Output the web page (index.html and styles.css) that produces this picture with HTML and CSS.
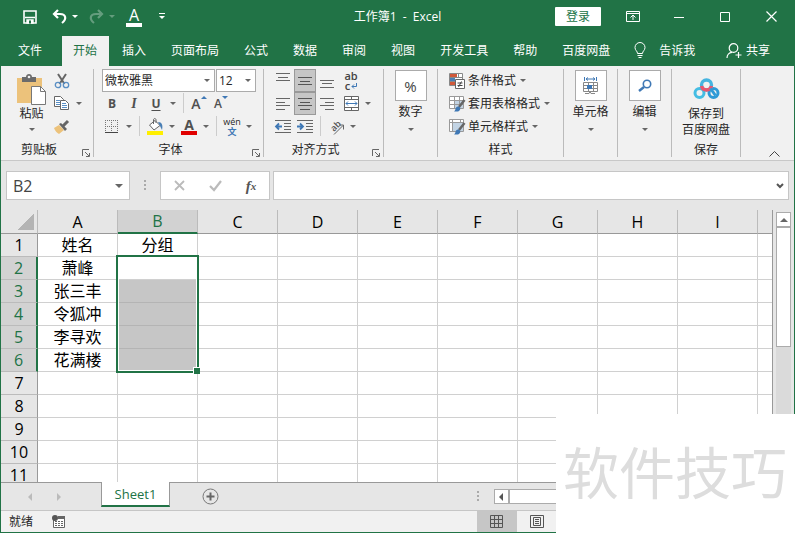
FILE: index.html
```
<!DOCTYPE html>
<html lang="zh-CN">

<head>
    <meta charset="UTF-8">
    <meta name="viewport" content="width=device-width, initial-scale=1.0">
    <title>工作簿1 - Excel</title>
    <link rel="stylesheet" href="styles.css">
</head>

<body>
    <!-- 标题栏 -->
    <header class="titlebar">
        <div class="quick">
            <button aria-label="保存"><svg width="14" height="14" viewBox="0 0 14 14"><path d="M1 1h12v12H1z" fill="none" stroke="#fff" stroke-width="1.600"/><path d="M2 7.500h10M4 10h6v3H4z" fill="#fff" stroke="#fff" stroke-width="1.400"/><path d="M6 10.500h2v3H6z" fill="#217346"/></svg></button>
            <button aria-label="撤消"><svg width="15" height="15" viewBox="0 0 15 15"><path d="M6 1L2 5l4 4M2 5h6c6 0 7 5 2 9" fill="none" stroke="#fff" stroke-width="2.200"/></svg></button>
            <button class="caret" aria-label="撤消列表"></button>
            <button class="dim" aria-label="恢复"><svg width="15" height="15" viewBox="0 0 15 15"><path d="M9 1l4 4-4 4M13 5H7C1 5 0 10 5 14" fill="none" stroke="#fff" stroke-width="2.200"/></svg></button>
            <button class="caret dim" aria-label="恢复列表"></button>
            <button class="quick-font" aria-label="字体颜色"><span>A</span></button>
            <button class="more" aria-label="自定义快速访问工具栏"><svg width="6" height="7" viewBox="0 0 6 7"><path d="M0 .5h6" stroke="#fff"/><path d="M0 3h6L3 6z" fill="#fff"/></svg></button>
        </div>
        <div class="title">工作簿1 &nbsp;- &nbsp;Excel</div>
        <div class="controls">
            <button class="login">登录</button>
            <button aria-label="功能区显示选项"><svg width="14" height="11" viewBox="0 0 14 11"><path d="M.5.500h13v10H.5zM.5 2.500h13M7 9V4.500M4.500 6.500L7 4l2.500 2.500" fill="none" stroke="#fff"/></svg></button>
            <button aria-label="最小化"><svg width="10" height="10" viewBox="0 0 10 10"><path d="M0 5.500h10" stroke="#fff"/></svg></button>
            <button aria-label="最大化"><svg width="10" height="10" viewBox="0 0 10 10"><path d="M.5.500h9v9H.5z" fill="none" stroke="#fff"/></svg></button>
            <button aria-label="关闭"><svg width="11" height="11" viewBox="0 0 11 11"><path d="M.5.500l10 10M10.500.5l-10 10" stroke="#fff" stroke-width="1.200"/></svg></button>
        </div>
    </header>

    <!-- 选项卡 -->
    <nav class="tabs">
        <button class="file">文件</button>
        <button class="active">开始</button>
        <button>插入</button>
        <button>页面布局</button>
        <button>公式</button>
        <button>数据</button>
        <button>审阅</button>
        <button>视图</button>
        <button>开发工具</button>
        <button>帮助</button>
        <button>百度网盘</button>
        <button class="tell"><svg width="12" height="17" viewBox="0 0 12 17"><path d="M3.500 11.500C3.500 9 1 8.500 1 5.500a5 5 0 0 1 10 0c0 3-2.500 3.500-2.500 6zM3.500 13.500h5M4.500 15.500h3" fill="none" stroke="#fff"/></svg>告诉我</button>
        <button class="share"><svg width="16" height="16" viewBox="0 0 16 16"><circle cx="7.500" cy="5" r="4.300" fill="none" stroke="#fff" stroke-width="1.200"/><path d="M1 15c0-3 2-5.500 5-5.700M12.500 9v6M9.500 12h6" fill="none" stroke="#fff" stroke-width="1.200"/></svg>共享</button>
    </nav>

    <!-- 功能区 -->
    <section class="ribbon">
        <div class="group clipboard">
            <div class="content">
                <button class="big paste"><svg width="29" height="31" viewBox="0 0 29 31"><path d="M0 4h25v25H0z" fill="#ecc27b"/><path d="M5 3h4c0-4 6-4 6 0h4v5H5z" fill="#6b6b6b"/><circle cx="12" cy="3" r="1.300" fill="#f1f1f1"/><path d="M14.500 12.500h9l5 5v13h-14z" fill="#fff" stroke="#777"/><path d="M23.500 12.500v5h5" fill="none" stroke="#777"/></svg><span>粘贴</span><i class="caret"></i></button>
                <div class="stack">
                    <div class="row"><button class="tool" aria-label="剪切"><svg width="16" height="16" viewBox="0 0 16 16"><path d="M4 1l6.500 10M12 1L5.500 11" stroke="#666" stroke-width="2"/><circle cx="4" cy="12" r="2.700" fill="none" stroke="#5a8fc4" stroke-width="1.300"/><circle cx="12" cy="12" r="2.700" fill="none" stroke="#5a8fc4" stroke-width="1.300"/></svg></button></div>
                    <div class="row"><button class="tool" aria-label="复制"><svg width="16" height="15" viewBox="0 0 16 15"><path d="M.5.500h6l3 3v7h-9z" fill="#fff" stroke="#666"/><path d="M2 4.500h4M2 6.500h4M2 8.500h4" stroke="#5a8fc4"/><path d="M6.500 4.500h5l3 3v6h-8z" fill="#fff" stroke="#666"/><path d="M8 7.500h4M8 9.500h5M8 11.500h5" stroke="#5a8fc4"/></svg></button><button class="caret" aria-label="复制选项"></button></div>
                    <div class="row"><button class="tool" aria-label="格式刷"><svg width="16" height="14" viewBox="0 0 16 14"><path d="M0 8l5-3 5 5-5 4C3 13 1 11 0 8z" fill="#ecc27b"/><path d="M5 4l2-1 6 6-2 2z" fill="#666"/><path d="M9 6l5-5" stroke="#666" stroke-width="3"/></svg></button></div>
                </div>
            </div>
            <h2>剪贴板</h2>
            <button class="launcher" aria-label="剪贴板设置"><svg width="8" height="8" viewBox="0 0 8 8"><path d="M.5 7V.5H7M3 3l4 4M7.500 4v3.500H4" fill="none" stroke="#666"/></svg></button>
        </div>

        <div class="group font">
            <div class="row combos">
                <div class="combo name"><select aria-label="字体"><option>微软雅黑</option></select><i class="caret"></i></div>
                <div class="combo size"><select aria-label="字号"><option>12</option></select><i class="caret"></i></div>
            </div>
            <div class="row">
                <button class="tool bold">B</button>
                <button class="tool italic">I</button>
                <button class="tool underline">U</button>
                <button class="caret" aria-label="下划线选项"></button>
                <i class="sep"></i>
                <button class="tool grow" aria-label="增大字号">A<i class="up"></i></button>
                <button class="tool shrink" aria-label="减小字号">A<i class="down"></i></button>
            </div>
            <div class="row">
                <button class="tool" aria-label="边框"><svg width="14" height="14" viewBox="0 0 14 14"><path d="M.5 0v13M6.500 0v13M12.500 0v13M0 .5h13M0 6.500h13" stroke="#777" stroke-dasharray="1 1"/><path d="M0 12.500h13" stroke="#444"/></svg></button>
                <button class="caret" aria-label="边框选项"></button>
                <i class="sep"></i>
                <button class="tool" aria-label="填充颜色"><svg width="17" height="17" viewBox="0 0 17 17"><path d="M2.500 7L8 2.500l5 5L7 12z" fill="#fff" stroke="#666"/><path d="M6.500 6V2c0-2 2.500-2 2.500 0v3" fill="none" stroke="#666"/><path d="M11 4c4 0 5 3 4 8l-2-4z" fill="#4a7fb5"/><path d="M0 13h16v4H0z" fill="#ffef00"/></svg></button>
                <button class="caret" aria-label="填充颜色选项"></button>
                <button class="tool color" aria-label="字体颜色">A</button>
                <button class="caret" aria-label="字体颜色选项"></button>
                <i class="sep"></i>
                <button class="tool pinyin"><span>wén</span><b>文</b></button>
                <button class="caret" aria-label="拼音选项"></button>
            </div>
            <h2>字体</h2>
            <button class="launcher" aria-label="字体设置"><svg width="8" height="8" viewBox="0 0 8 8"><path d="M.5 7V.5H7M3 3l4 4M7.500 4v3.500H4" fill="none" stroke="#666"/></svg></button>
        </div>

        <div class="group align">
            <div class="row">
                <button class="tool" aria-label="顶端对齐"><svg width="14" height="16" viewBox="0 0 14 16"><path d="M0 .5h14M2 4.500h10M0 7.500h14" stroke="#666"/></svg></button>
                <button class="tool on" aria-label="垂直居中"><svg width="14" height="14" viewBox="0 0 14 14"><path d="M0 3.500h14M2 7.500h10M0 10.500h14" stroke="#555"/></svg></button>
                <button class="tool" aria-label="底端对齐"><svg width="14" height="14" viewBox="0 0 14 14"><path d="M0 6.500h14M2 9.500h10M0 13.500h14" stroke="#666"/></svg></button>
                <button class="tool wrap" aria-label="自动换行"><span>ab</span><span>c<svg width="6" height="6" viewBox="0 0 6 6"><path d="M5.500 0v3.500H1M3 1.500l-2 2 2 2" fill="none" stroke="#3f78b5"/></svg></span></button>
            </div>
            <div class="row">
                <button class="tool" aria-label="左对齐"><svg width="14" height="12" viewBox="0 0 14 12"><path d="M0 .5h14M0 4.500h9M0 7.500h14M0 11.500h9" stroke="#666"/></svg></button>
                <button class="tool on" aria-label="居中"><svg width="14" height="12" viewBox="0 0 14 12"><path d="M0 .5h14M2 4.500h10M0 7.500h14M2 11.500h10" stroke="#555"/></svg></button>
                <button class="tool" aria-label="右对齐"><svg width="14" height="12" viewBox="0 0 14 12"><path d="M0 .5h14M5 4.500h9M0 7.500h14M5 11.500h9" stroke="#666"/></svg></button>
                <button class="tool merge" aria-label="合并后居中"><svg width="15" height="15" viewBox="0 0 15 15"><path d="M.5.500h14v14H.5zM.5 3.500h14M.5 11.500h14M7.500.5v3M7.500 11.500v3" fill="#fff" stroke="#666"/><path d="M2 7.500h11M4 5.500l-2 2 2 2M11 5.500l2 2-2 2" fill="none" stroke="#3f78b5"/></svg></button>
                <button class="caret" aria-label="合并选项"></button>
            </div>
            <div class="row">
                <button class="tool" aria-label="减少缩进量"><svg width="16" height="13" viewBox="0 0 16 13"><path d="M0 .5h16M9 3.500h7M9 6.500h7M9 9.500h7M0 12.500h16" stroke="#666"/><path d="M1 6.500h6M4 3.500l-3 3 3 3" fill="none" stroke="#3f78b5" stroke-width="1.800"/></svg></button>
                <button class="tool" aria-label="增加缩进量"><svg width="16" height="13" viewBox="0 0 16 13"><path d="M0 .5h16M9 3.500h7M9 6.500h7M9 9.500h7M0 12.500h16" stroke="#666"/><path d="M0 6.500h6M3 3.500l3 3-3 3" fill="none" stroke="#3f78b5" stroke-width="1.800"/></svg></button>
                <i class="sep"></i>
                <button class="tool" aria-label="方向"><svg width="18" height="18" viewBox="0 0 18 18"><text class="orient" transform="translate(7 14) rotate(-45)">ab</text><path d="M7 16.500l9-9M12 7h4.500v4.500" fill="none" stroke="#666"/></svg></button>
                <button class="caret" aria-label="方向选项"></button>
            </div>
            <h2>对齐方式</h2>
            <button class="launcher" aria-label="对齐设置"><svg width="8" height="8" viewBox="0 0 8 8"><path d="M.5 7V.5H7M3 3l4 4M7.500 4v3.500H4" fill="none" stroke="#666"/></svg></button>
        </div>

        <div class="group">
            <button class="big boxed"><span class="box percent">%</span><span>数字</span><i class="caret"></i></button>
        </div>

        <div class="group styles">
            <div class="row"><button class="line"><svg width="16" height="16" viewBox="0 0 16 16"><path d="M.5.500h13v12H.5z" fill="#fff" stroke="#888"/><path d="M1 1h7v3H1zM1 9h6v3H1z" fill="#d0583a"/><path d="M1 5h5v3H1z" fill="#4a7fb5"/><path d="M9.500 1v4M1 4.500h12M1 8.500h6" stroke="#888"/><path d="M6.500 6.500h9v9h-9z" fill="#fff" stroke="#666"/><path d="M8.500 10h5M8.500 12.500h5M12.500 8.500l-3 5.500" stroke="#444"/></svg>条件格式<i class="caret"></i></button></div>
            <div class="row"><button class="line"><svg width="16" height="16" viewBox="0 0 16 16"><path d="M.5.500h14v12H.5z" fill="#fff" stroke="#999"/><path d="M5 4h9v8H5z" fill="#c3d4e4"/><path d="M5.500.5v12M10.500.5v12M.5 4.500h14M.5 8.500h14" stroke="#999"/><path d="M15.500 4L10 11" stroke="#666" stroke-width="2.500"/><path d="M5 15.500c2-1 1-5 4-5s3 4 0 5z" fill="#3f78b5"/></svg>套用表格格式<i class="caret"></i></button></div>
            <div class="row"><button class="line"><svg width="16" height="16" viewBox="0 0 16 16"><path d="M.5.500h14v12H.5z" fill="#fff" stroke="#999"/><path d="M3.500.5v12M.5 3.500h14M11.500.5v3" stroke="#999"/><path d="M4 4h10v8H4z" fill="#c3d4e4"/><path d="M15.500 4L10 11" stroke="#666" stroke-width="2.500"/><path d="M5 15.500c2-1 1-5 4-5s3 4 0 5z" fill="#3f78b5"/></svg>单元格样式<i class="caret"></i></button></div>
            <h2>样式</h2>
        </div>

        <div class="group">
            <button class="big boxed"><span class="box"><svg width="16" height="17" viewBox="0 0 16 17"><path d="M1.500 0v4M13.500 0v4M3 2h9M5 .5L3 2l2 1.500M10 .5L12 2l-2 1.500" fill="none" stroke="#3f78b5"/><path d="M.5 5.500h14v9H.5zM5.500 5.500v9M10.500 5.500v9M.5 8.500h14M.5 11.500h14M2 16.500h4l1-2 1 2h4" fill="none" stroke="#888"/><path d="M4 8h5v4H4z" fill="#3f78b5"/></svg></span><span>单元格</span><i class="caret"></i></button>
        </div>

        <div class="group">
            <button class="big boxed"><span class="box"><svg width="14" height="14" viewBox="0 0 14 14"><circle cx="9" cy="5" r="3.700" fill="none" stroke="#3f78b5" stroke-width="1.600"/><path d="M6 8l-5 4" stroke="#3f78b5" stroke-width="2.400"/></svg></span><span>编辑</span><i class="caret"></i></button>
        </div>

        <div class="group save">
            <button class="big"><svg width="27" height="21" viewBox="0 0 27 21"><circle cx="6.500" cy="15" r="4.500" fill="none" stroke="#45bde3" stroke-width="3"/><circle cx="20.500" cy="15" r="4.500" fill="none" stroke="#2f9ad6" stroke-width="3"/><circle cx="13.500" cy="7" r="5" fill="none" stroke="#45b4e0" stroke-width="3.400"/><path d="M8.600 8a5 5 0 0 0 9.800 0" fill="none" stroke="#e8566f" stroke-width="3.400"/><path d="M17.500 10.500l5 7" stroke="#2f9ad6" stroke-width="3"/></svg><span>保存到<br>百度网盘</span></button>
            <h2>保存</h2>
        </div>

        <button class="collapse" aria-label="折叠功能区"><svg width="11" height="6" viewBox="0 0 11 6"><path d="M.5 5.500l5-5 5 5" fill="none" stroke="#444"/></svg></button>
    </section>

    <!-- 编辑栏 -->
    <section class="formula">
        <div class="namebox"><input type="text" value="B2" aria-label="名称框"><i class="caret"></i></div>
        <i class="dots"></i>
        <div class="actions">
            <button aria-label="取消"><svg width="11" height="11" viewBox="0 0 11 11"><path d="M1 1l9 9M10 1l-9 9" stroke="#bbb" stroke-width="1.800"/></svg></button>
            <button aria-label="输入"><svg width="13" height="11" viewBox="0 0 13 11"><path d="M1 6l4 4 7-9" fill="none" stroke="#bbb" stroke-width="2.200"/></svg></button>
            <button class="fx" aria-label="插入函数">f<sub>x</sub></button>
        </div>
        <div class="editor"><input type="text" aria-label="编辑栏"><svg width="8" height="6" viewBox="0 0 8 6"><path d="M1 1l3 3 3-3" fill="none" stroke="#555" stroke-width="2"/></svg></div>
    </section>

    <!-- 工作表 -->
    <main class="sheet">
        <div class="grid">
            <table>
                <thead>
                    <tr>
                        <th class="corner"></th>
                        <th>A</th>
                        <th class="sel">B</th>
                        <th>C</th>
                        <th>D</th>
                        <th>E</th>
                        <th>F</th>
                        <th>G</th>
                        <th>H</th>
                        <th>I</th>
                        <th class="rest"></th>
                    </tr>
                </thead>
                <tbody id="rows"></tbody>
            </table>
        </div>
        <div class="vscroll">
            <button aria-label="向上滚动"><i class="up"></i></button>
            <div class="thumb"></div>
        </div>
    </main>

    <!-- 工作表标签 -->
    <footer class="sheets">
        <button class="prev" aria-label="上一个"></button>
        <button class="next" aria-label="下一个"></button>
        <button class="tab">Sheet1</button>
        <button class="add" aria-label="新工作表"><svg width="17" height="17" viewBox="0 0 17 17"><circle cx="8.500" cy="8.500" r="7.500" fill="none" stroke="#777"/><path d="M8.500 4.500v8M4.500 8.500h8" stroke="#666" stroke-width="2"/></svg></button>
        <div class="hscroll">
            <i class="dots"></i>
            <button aria-label="向左滚动"><i class="left"></i></button>
            <div class="thumb"></div>
        </div>
    </footer>

    <!-- 状态栏 -->
    <footer class="status">
        <span>就绪</span>
        <button aria-label="宏录制"><svg width="14" height="13" viewBox="0 0 14 13"><path d="M1.500 4v8.500h11V2H6" fill="#fff" stroke="#666"/><path d="M6 1h7v3H6z" fill="#666"/><circle cx="3" cy="3" r="3" fill="#555"/><path d="M3 6.500h9M3 8.500h9M3 10.500h9" stroke="#666" stroke-dasharray="2 1"/></svg></button>
        <div class="views">
            <button class="on" aria-label="普通"><svg width="13" height="13" viewBox="0 0 13 13"><path d="M.5.500h12v12H.5zM4.500.5v12M8.500.5v12M.5 4.500h12M.5 8.500h12" fill="none" stroke="#555"/></svg></button>
            <button aria-label="页面布局"><svg width="14" height="13" viewBox="0 0 14 13"><path d="M.5.500h13v12H.5zM3.500 2.500h7v8h-7zM5 4.500h4M5 6.500h4M5 8.500h4" fill="none" stroke="#555"/></svg></button>
        </div>
    </footer>

    <div class="watermark">软件技巧</div>

    <script>
        // 表格数据
        var data = [
            ['姓名', '分组'],
            ['萧峰'],
            ['张三丰'],
            ['令狐冲'],
            ['李寻欢'],
            ['花满楼']
        ];
        var html = '';
        for (var r = 1; r <= 11; r++) {
            var picked = r >= 2 && r <= 6; // B2:B6 为选中区域
            html += '<tr><th class="' + (picked ? 'sel' : '') + '">' + r + '</th>';
            for (var c = 0; c < 10; c++) {
                var text = (data[r - 1] && data[r - 1][c]) || '';
                if (r === 2 && c === 1) {
                    html += '<td class="first"><div class="range"></div></td>';
                } else {
                    html += '<td' + (picked && c === 1 ? ' class="picked"' : '') + '>' + text + '</td>';
                }
            }
            html += '</tr>';
        }
        document.getElementById('rows').innerHTML = html;
    </script>
</body>

</html>
```
FILE: styles.css
```
* {
    box-sizing: border-box;
}

body {
    margin: 0;
    height: 100vh;
    display: flex;
    flex-direction: column;
    overflow: hidden;
    border: 1px solid #217346;
    border-top: 0;
    background: #e6e6e6;
    color: #262626;
    font: 12px/16px "Open Sans", "Noto Sans CJK SC", sans-serif;
}

button,
input,
select {
    margin: 0;
    padding: 0;
    border: 0;
    background: none;
    color: inherit;
    font: inherit;
}

button {
    display: flex;
    align-items: center;
    justify-content: center;
    flex: none;
}

svg {
    display: block;
    flex: none;
    overflow: visible;
}

h2 {
    margin: 0;
    font-size: 12px;
    font-weight: normal;
    line-height: 24px;
    text-align: center;
}

/* 小三角 */
.caret {
    display: flex;
    align-items: center;
    justify-content: center;
    flex: none;
    width: 12px;
}

.caret::after {
    content: "";
    border: 3px solid transparent;
    border-top-color: #666;
    border-bottom: 0;
}

.up,
.down,
.left {
    border: 3px solid transparent;
}

.up {
    border-top: 0;
    border-bottom-color: #3f78b5;
}

.down {
    border-bottom: 0;
    border-top-color: #3f78b5;
}

.left {
    border-width: 4px;
    border-left: 0;
    border-right-color: #555;
}

.dots {
    width: 2px;
    height: 11px;
    background: repeating-linear-gradient(#aaa 0 2px, transparent 2px 4px);
}

/* 标题栏 */
.titlebar {
    display: grid;
    grid-template-columns: 1fr auto 1fr;
    align-items: center;
    flex: none;
    height: 36px;
    padding-bottom: 3px;
    background: #217346;
    color: #fff;
}

.title {
    white-space: pre;
}

.quick {
    display: flex;
    align-items: center;
    padding-left: 18px;
}

.quick button {
    width: 22px;
    height: 20px;
    margin-right: 7px;
}

.quick .caret {
    width: 12px;
    margin: 0 4px 0 -8px;
}

.quick .caret::after {
    border-top-color: #fff;
}

.quick .dim {
    opacity: 0.3;
}

.quick .quick-font {
    width: 16px;
    margin: 0 12px 0 4px;
}

.quick-font span {
    width: 16px;
    border-bottom: 4px solid #fff;
    font-size: 16px;
    line-height: 16px;
}

.quick .more {
    width: 16px;
}

.controls {
    display: flex;
    align-items: center;
    justify-content: flex-end;
}

.controls button {
    width: 46px;
    height: 32px;
}

.controls .login {
    height: 19px;
    margin-right: 9px;
    border-radius: 1px;
    background: #fff;
    color: #217346;
}

/* 选项卡 */
.tabs {
    display: flex;
    gap: 1px;
    flex: none;
    height: 30px;
    padding-left: 5px;
    background: #217346;
}

.tabs button {
    padding: 0 12px 1px;
    color: #fff;
}

.tabs .file {
    margin-right: 7px;
}

.tabs .active {
    padding: 0 12px 1px 11px;
    background: #f1f1f1;
    color: #217346;
}

.tabs .tell {
    gap: 13px;
    padding-left: 11px;
}

.tabs .share {
    gap: 4px;
    margin-left: auto;
    padding-right: 24px;
}

/* 功能区 */
.ribbon {
    display: flex;
    flex: none;
    height: 95px;
    padding: 3px 0;
    border-bottom: 1px solid #c8c8c8;
    background: #f1f1f1;
}

.group {
    position: relative;
    flex: none;
    width: 54px;
    border-right: 1px solid #bbb;
}

.row {
    display: flex;
    height: 23px;
}

.content {
    display: flex;
}

.tool {
    width: 22px;
    height: 23px;
}

.sep {
    width: 1px;
    height: 20px;
    margin: 1px 4px 0;
    background: #ccc;
}

.launcher {
    position: absolute;
    right: 3px;
    bottom: 0;
}

.big {
    width: 100%;
    flex-direction: column;
}

.big .caret {
    height: 10px;
}

.clipboard {
    width: 93px;
}

.clipboard h2 {
    padding-right: 16px;
}

.clipboard .content {
    padding-left: 16px;
}

.paste {
    width: 29px;
    margin-right: 5px;
    justify-content: flex-start;
    padding-top: 5px;
}

.paste span {
    margin: 1px 0 2px;
}

.font {
    width: 170px;
}

.font .row {
    padding-left: 7px;
}

.font h2,
.align h2 {
    padding-right: 16px;
}

.combos {
    gap: 1px;
}

.font .combos {
    padding-left: 8px;
}

.combo {
    position: relative;
    width: 40px;
    height: 23px;
    border: 1px solid #ababab;
    background: #fff;
}

.combo.name {
    width: 113px;
}

.combo select {
    width: 100%;
    height: 21px;
    padding-left: 2px;
    appearance: none;
}

.combo .caret,
.namebox .caret {
    position: absolute;
    top: 0;
    right: 1px;
    height: 100%;
    pointer-events: none;
}

.bold,
.italic,
.underline,
.grow,
.shrink,
.color {
    color: #505050;
    font-weight: bold;
}

.italic {
    font-family: "Liberation Serif", serif;
    font-size: 14px;
    font-style: italic;
}

.underline {
    text-decoration: underline;
    text-underline-offset: 2px;
}

.grow,
.shrink {
    align-items: flex-start;
    padding-top: 4px;
    font-size: 14px;
    font-weight: 600;
}

.shrink {
    font-size: 12px;
}

.color {
    flex-direction: column;
    font-size: 14px;
    line-height: 13px;
}

.color::after {
    content: "";
    width: 16px;
    height: 4px;
    background: #e00000;
}

.pinyin {
    flex-direction: column;
    font-size: 9px;
    line-height: 10px;
}

.pinyin b {
    color: #3f78b5;
}

.align {
    width: 120px;
}

.align .row {
    padding-left: 8px;
}

.tool.on {
    border: 1px solid #999;
    background: #c6c6c6;
}

.wrap,
.merge {
    margin-left: 2px;
}

.wrap {
    flex-direction: column;
    color: #444;
    font-size: 11px;
    font-weight: 600;
    line-height: 10px;
}

.wrap span {
    display: flex;
    align-items: center;
    gap: 1px;
}

.orient {
    fill: #555;
    font-size: 9px;
    font-weight: 600;
}

.boxed span {
    margin-bottom: 4px;
}

.boxed .box {
    display: flex;
    align-items: center;
    justify-content: center;
    width: 32px;
    height: 31px;
    margin: 1px 0 3px;
    border: 1px solid #ababab;
    background: #fff;
}

.percent {
    color: #444;
    font-size: 15px;
}

.styles {
    width: 126px;
}

.line {
    gap: 3px;
    padding-left: 11px;
}

.line .caret {
    margin-left: -2px;
}

.save {
    width: 69px;
}

.save .big {
    height: 69px;
    justify-content: flex-end;
    gap: 7px;
}

.collapse {
    align-self: flex-end;
    margin: 0 14px 0 auto;
}

/* 编辑栏 */
.formula {
    display: flex;
    align-items: center;
    flex: none;
    height: 49px;
    padding: 0 5px;
}

.namebox,
.actions,
.editor {
    position: relative;
    display: flex;
    align-items: center;
    height: 29px;
    border: 1px solid #c6c6c6;
    background: #fff;
}

.namebox {
    width: 124px;
}

.namebox input {
    width: 100%;
    padding-left: 6px;
    color: #444;
    font-size: 16px;
}

.namebox .caret {
    right: 4px;
}

.namebox .caret::after {
    border-width: 4px 4px 0;
}

.formula .dots {
    margin: 0 14px;
}

.actions {
    width: 110px;
    margin-right: 3px;
}

.actions button {
    flex: 1;
}

.actions .fx {
    color: #555;
    font: italic bold 15px/16px "Liberation Serif", serif;
}

.fx sub {
    font-size: 11px;
}

.editor {
    flex: 1;
    padding-right: 4px;
}

.editor input {
    flex: 1;
    min-width: 0;
}

/* 工作表 */
.sheet {
    display: flex;
    flex: 1;
    min-height: 0;
}

.grid {
    flex: 1;
    overflow: hidden;
    border-right: 1px solid #999;
    background: #fff;
}

table {
    width: 100%;
    table-layout: fixed;
    border-spacing: 0;
    color: #000;
    font-size: 16px;
    line-height: 22px;
}

th,
td {
    height: 23px;
    padding: 0;
    border: solid #d0d0d0;
    border-width: 0 1px 1px 0;
    text-align: center;
}

th {
    border-color: #bbb;
    background: #e6e6e6;
    font-weight: normal;
}

thead th {
    width: 80px;
    height: 24px;
    border-bottom-color: #999;
}

thead .corner {
    width: 37px;
    background: linear-gradient(135deg, transparent 50%, #b4b4b4 50%) 17px 4px / 16px 16px no-repeat #e6e6e6;
}

thead .rest {
    width: auto;
}

tr > :last-child {
    border-right: 0;
}

tbody th {
    border-right-color: #999;
}

.sel {
    background: #d2d2d2;
    color: #217346;
}

thead .sel {
    border-bottom: 2px solid #217346;
}

tbody .sel {
    border-right: 2px solid #217346;
}

.picked {
    background: #c6c6c6;
    border-bottom-color: #b4b4b4;
}

.first {
    position: relative;
}

/* 选区外框，跨五行 */
.range {
    position: absolute;
    top: -2px;
    left: -2px;
    width: 83px;
    height: 118px;
    border: 2px solid #217346;
    box-shadow: inset 0 0 0 1px #fff;
}

.range::after {
    content: "";
    position: absolute;
    right: -3px;
    bottom: -3px;
    width: 6px;
    height: 6px;
    border: solid #fff;
    border-width: 1px 0 0 1px;
    background: #217346;
}

.vscroll {
    display: flex;
    flex-direction: column;
    width: 15px;
    margin: 2px 3px 0;
    background: #dadada;
}

.vscroll button,
.hscroll button {
    width: 15px;
    height: 15px;
    border: 1px solid #ababab;
    background: #fff;
}

.vscroll .up {
    border-width: 0 4px 4px;
    border-bottom-color: #666;
}

.vscroll .thumb {
    height: 120px;
    border: 1px solid #ababab;
    background: #fff;
}

/* 工作表标签 */
.sheets {
    display: flex;
    align-items: center;
    flex: none;
    height: 28px;
    border-top: 1px solid #999;
}

.prev,
.next {
    width: 4px;
    height: 8px;
    border: 4px solid transparent;
}

.prev {
    margin-left: 27px;
    border-left: 0;
    border-right-color: #bbb;
}

.next {
    margin-left: 25px;
    border-right: 0;
    border-left-color: #bbb;
}

.sheets .tab {
    align-self: flex-start;
    width: 69px;
    height: 25px;
    margin: -1px 32px 0 40px;
    border: solid #999;
    border-width: 0 1px;
    border-bottom: 2px solid #217346;
    background: #fff;
    color: #217346;
    font-size: 13px;
}

.hscroll {
    display: flex;
    align-items: center;
    width: 40%;
    margin-left: auto;
}

.hscroll button {
    margin-left: 15px;
}

.hscroll .thumb {
    flex: 1;
    height: 15px;
    border: 1px solid #ababab;
    background: #fff;
}

/* 状态栏 */
.status {
    display: flex;
    align-items: center;
    flex: none;
    height: 22px;
    border-top: 1px solid #c6c6c6;
    background: #f1f1f1;
}

.status > span {
    margin: 0 19px 0 8px;
}

.views {
    display: flex;
    width: 40%;
    height: 21px;
    margin-left: auto;
}

.views button {
    width: 40px;
}

.views .on {
    background: #c6c6c6;
}

/* 右下角水印 */
.watermark {
    position: fixed;
    right: 0;
    bottom: 0;
    padding: 26px 8px 29px 7px;
    background: #fff;
    color: #ddd;
    font-size: 56px;
    line-height: 64px;
}
```
